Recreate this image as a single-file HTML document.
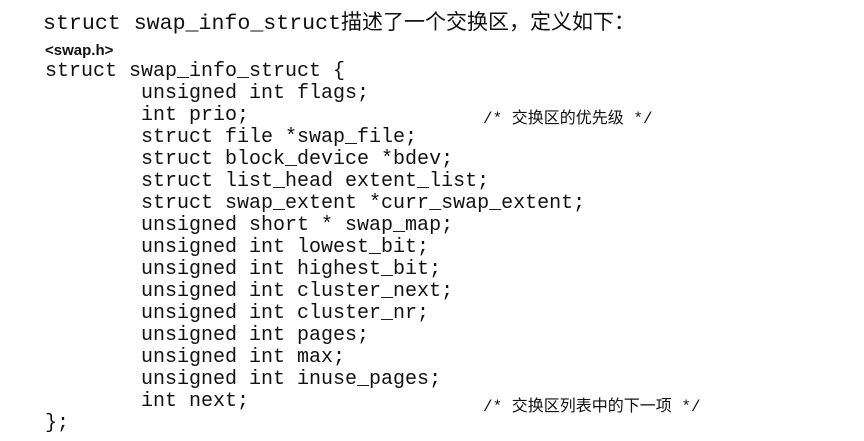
<!DOCTYPE html>
<html><head><meta charset="utf-8"><style>
body{margin:0;width:864px;height:441px;background:#fff;overflow:hidden;position:relative;color:#111}
.t{position:absolute;left:43px;top:6px;font:21.6px "Liberation Mono","Noto Sans CJK SC",monospace;white-space:pre}
.h{position:absolute;left:45px;top:42px;font:bold 15px "Liberation Sans",sans-serif}
.c{position:absolute;left:45px;top:61px;font:20px/22px "Liberation Mono",monospace;white-space:pre}
.cm{position:absolute;left:483px;font:16px "Liberation Mono","Noto Sans CJK SC",monospace;white-space:pre}
</style></head><body>
<div class="t">struct swap_info_struct<span style="font-family:'Noto Sans CJK SC',sans-serif;font-size:21px">描述了一个交换区，定义如下：</span></div>
<div class="h">&lt;swap.h&gt;</div>
<div class="c">struct swap_info_struct {
        unsigned int flags;
        int prio;
        struct file *swap_file;
        struct block_device *bdev;
        struct list_head extent_list;
        struct swap_extent *curr_swap_extent;
        unsigned short * swap_map;
        unsigned int lowest_bit;
        unsigned int highest_bit;
        unsigned int cluster_next;
        unsigned int cluster_nr;
        unsigned int pages;
        unsigned int max;
        unsigned int inuse_pages;
        int next;
};</div>
<div class="cm" style="top:104px">/* 交换区的优先级 */</div>
<div class="cm" style="top:392px">/* 交换区列表中的下一项 */</div>
</body></html>
